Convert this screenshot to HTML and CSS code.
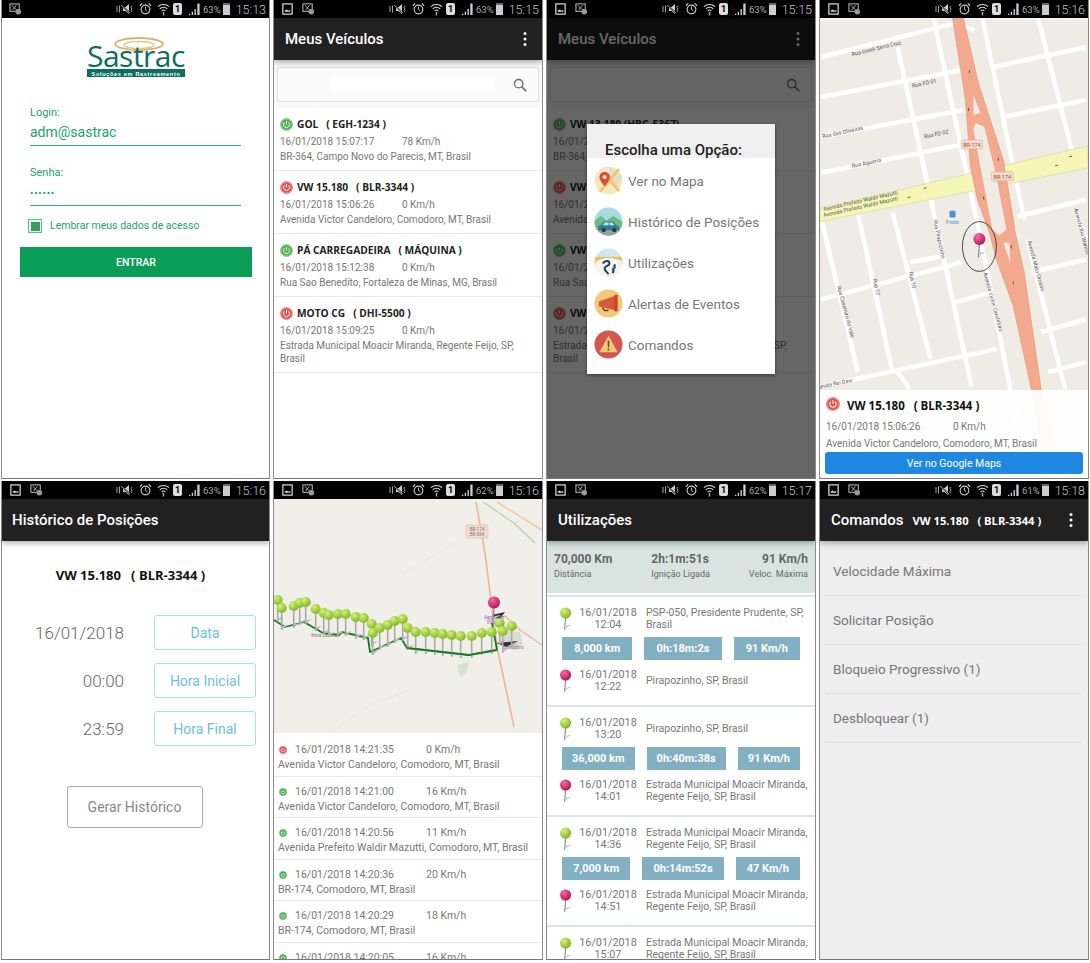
FILE: index.html
```html
<!DOCTYPE html>
<html lang="pt-BR">
<head>
    <meta charset="UTF-8">
    <meta name="viewport" content="width=device-width, initial-scale=1.0">
    <title>Sastrac - Soluções em Rastreamento</title>
    <link rel="stylesheet" href="styles.css">
</head>
<body>
    <!-- icones usados em todas as telas -->
    <svg class="defs" width="0" height="0">
        <defs>
            <radialGradient id="ballGreen" cx="35%" cy="30%" r="75%"><stop offset="0" stop-color="#d6f07a"/><stop offset="1" stop-color="#7db322"/></radialGradient>
            <radialGradient id="ballPink" cx="35%" cy="30%" r="75%"><stop offset="0" stop-color="#f56aa8"/><stop offset="1" stop-color="#b50f55"/></radialGradient>
            <symbol id="i-photo" viewBox="0 0 14 14"><rect x="2" y="1.5" width="10" height="11" fill="none" stroke="#ddd" stroke-width="1.3"/><path d="M4 10h6V8L8 9 6 7.5 4 9z" fill="#ddd"/></symbol>
            <symbol id="i-shot" viewBox="0 0 14 14"><rect x="1" y="1.5" width="10" height="8" fill="none" stroke="#bbb" stroke-width="1.1"/><path d="M3 3l5 5M8 3L4 8" stroke="#bbb"/><circle cx="10" cy="10" r="3" fill="#999"/></symbol>
            <symbol id="i-mute" viewBox="0 0 18 14"><path d="M7 5h2.500L13 2v10L9.500 9H7z" fill="#ccc"/><path d="M5 3l9 8" stroke="#000" stroke-width="1.600"/><path d="M5 3l9 8" stroke="#ccc" stroke-width=".8"/><path d="M1 4v6M3.500 3.500v7M16 4l-1 1.500 1 1.500-1 1.500 1 1.500" fill="none" stroke="#bbb" stroke-width=".9"/></symbol>
            <symbol id="i-alarm" viewBox="0 0 14 14"><circle cx="7" cy="7.500" r="4.700" fill="none" stroke="#ccc" stroke-width="1.200"/><path d="M7 4.500v3l2 1.500" fill="none" stroke="#ccc"/><path d="M1 3.500L3.500 1M13 3.500L10.500 1" stroke="#ccc" stroke-width="1.300"/></symbol>
            <symbol id="i-wifi" viewBox="0 0 14 14"><path d="M1 4.500a9 9 0 0 1 12 0M3 6.800a6 6 0 0 1 8 0M5 9a3 3 0 0 1 4 0" fill="none" stroke="#ddd" stroke-width="1.200"/><path d="M6.200 10h1.600v4H6.200z" fill="#aaa"/></symbol>
            <symbol id="i-signal" viewBox="0 0 14 14"><path d="M1 12h1.500v1.500H1zM4 10h1.500v3.500H4zM7 7h1.500v6.500H7zM10 1h2.500v12.500H10z" fill="#ccc"/></symbol>
            <symbol id="i-power" viewBox="0 0 16 16"><circle cx="8" cy="8" r="8" fill="currentColor" opacity=".65"/><circle cx="8" cy="8" r="6.300" fill="currentColor"/><path d="M5.400 5.400a3.700 3.700 0 1 0 5.200 0M8 3.800V8" fill="none" stroke="#fff" stroke-width="1.200"/></symbol>
            <symbol id="i-kebab" viewBox="0 0 6 16"><circle cx="3" cy="2.500" r="1.500" fill="#fff"/><circle cx="3" cy="8" r="1.500" fill="#fff"/><circle cx="3" cy="13.500" r="1.500" fill="#fff"/></symbol>
            <symbol id="i-search" viewBox="0 0 16 16"><circle cx="6.500" cy="6.500" r="4.800" fill="none" stroke="#666" stroke-width="1.500"/><path d="M10 10l5 5" stroke="#666" stroke-width="1.700"/></symbol>
            <symbol id="pin-green" viewBox="0 0 16 26"><path d="M7 23l7-4-6 1z" fill="#ccc"/><path d="M7 12L6 25" stroke="#888" stroke-width="1.200"/><circle cx="7" cy="6.500" r="6" fill="url(#ballGreen)"/></symbol>
            <symbol id="pin-pink" viewBox="0 0 16 26"><path d="M7 23l7-4-6 1z" fill="#ccc"/><path d="M7 12L6 25" stroke="#888" stroke-width="1.200"/><circle cx="7" cy="6.500" r="6" fill="url(#ballPink)"/></symbol>
            <symbol id="route-ball" viewBox="0 0 16 34"><path d="M7 32l8-5-7 1z" fill="#bbb"/><path d="M7 10v23" stroke="#aaa" stroke-width="2"/><circle cx="7" cy="6" r="6.200" fill="url(#ballGreen)"/></symbol>
        </defs>
    </svg>

    <div class="gallery">

        <!-- tela de login -->
        <div class="phone">
            <div class="statusbar">
                <div class="status-left"><svg class="st-icon"><use href="#i-shot"/></svg></div>
                <div class="status-right">
                    <svg class="st-icon wide"><use href="#i-mute"/></svg>
                    <svg class="st-icon"><use href="#i-alarm"/></svg>
                    <svg class="st-icon tight"><use href="#i-wifi"/></svg>
                    <span class="sim">1</span>
                    <svg class="st-icon tight"><use href="#i-signal"/></svg>
                    <span class="battery-text">63%</span><span class="battery"></span>
                    <span class="clock">15:13</span>
                </div>
            </div>
            <div class="login">
                <svg class="logo" viewBox="0 0 100 42" width="100" height="42">
                    <ellipse cx="52" cy="7" rx="24" ry="6" fill="none" stroke="#d9b36c" stroke-width="1.800"/>
                    <ellipse cx="52" cy="8" rx="15" ry="3.500" fill="none" stroke="#e3c88f" stroke-width="1.400"/>
                    <text x="0" y="30" class="logo-name">Sastrac</text>
                    <rect x="0" y="32" width="98" height="8" fill="#0f6d5f"/>
                    <text x="49" y="38.500" text-anchor="middle" class="logo-sub">Soluções em Rastreamento</text>
                </svg>
                <label class="field-label">Login:</label>
                <div class="field-value">adm@sastrac</div>
                <label class="field-label second">Senha:</label>
                <div class="field-value pass">••••••</div>
                <div class="remember"><span class="check"><span></span></span>Lembrar meus dados de acesso</div>
                <button class="enter">ENTRAR</button>
            </div>
        </div>

        <!-- lista de veiculos -->
        <div class="phone">
            <div class="statusbar">
                <div class="status-left"><svg class="st-icon"><use href="#i-photo"/></svg><svg class="st-icon"><use href="#i-shot"/></svg></div>
                <div class="status-right">
                    <svg class="st-icon wide"><use href="#i-mute"/></svg>
                    <svg class="st-icon"><use href="#i-alarm"/></svg>
                    <svg class="st-icon tight"><use href="#i-wifi"/></svg>
                    <span class="sim">1</span>
                    <svg class="st-icon tight"><use href="#i-signal"/></svg>
                    <span class="battery-text">63%</span><span class="battery"></span>
                    <span class="clock">15:15</span>
                </div>
            </div>
            <div class="screen">
                <div class="appbar"><span class="appbar-title">Meus Veículos</span><svg class="kebab"><use href="#i-kebab"/></svg></div>
                <div class="search-wrap"><div class="search"><span class="search-strip"></span><svg class="search-icon"><use href="#i-search"/></svg></div></div>
                <div class="vehicle">
                    <div class="vehicle-name"><svg class="power on"><use href="#i-power"/></svg>GOL   ( EGH-1234 )</div>
                    <div class="vehicle-info"><span class="when">16/01/2018 15:07:17</span><span>78 Km/h</span></div>
                    <div class="vehicle-addr">BR-364, Campo Novo do Parecis, MT, Brasil</div>
                </div>
                <div class="vehicle">
                    <div class="vehicle-name"><svg class="power off"><use href="#i-power"/></svg>VW 15.180   ( BLR-3344 )</div>
                    <div class="vehicle-info"><span class="when">16/01/2018 15:06:26</span><span>0 Km/h</span></div>
                    <div class="vehicle-addr">Avenida Victor Candeloro, Comodoro, MT, Brasil</div>
                </div>
                <div class="vehicle">
                    <div class="vehicle-name"><svg class="power on"><use href="#i-power"/></svg>PÁ CARREGADEIRA   ( MÁQUINA )</div>
                    <div class="vehicle-info"><span class="when">16/01/2018 15:12:38</span><span>0 Km/h</span></div>
                    <div class="vehicle-addr">Rua Sao Benedito, Fortaleza de Minas, MG, Brasil</div>
                </div>
                <div class="vehicle">
                    <div class="vehicle-name"><svg class="power off"><use href="#i-power"/></svg>MOTO CG   ( DHI-5500 )</div>
                    <div class="vehicle-info"><span class="when">16/01/2018 15:09:25</span><span>0 Km/h</span></div>
                    <div class="vehicle-addr">Estrada Municipal Moacir Miranda, Regente Feijo, SP, Brasil</div>
                </div>
            </div>
        </div>

        <!-- dialogo de opcoes -->
        <div class="phone">
            <div class="statusbar">
                <div class="status-left"><svg class="st-icon"><use href="#i-photo"/></svg><svg class="st-icon"><use href="#i-shot"/></svg></div>
                <div class="status-right">
                    <svg class="st-icon wide"><use href="#i-mute"/></svg>
                    <svg class="st-icon"><use href="#i-alarm"/></svg>
                    <svg class="st-icon tight"><use href="#i-wifi"/></svg>
                    <span class="sim">1</span>
                    <svg class="st-icon tight"><use href="#i-signal"/></svg>
                    <span class="battery-text">63%</span><span class="battery"></span>
                    <span class="clock">15:15</span>
                </div>
            </div>
            <div class="screen">
                <div class="appbar"><span class="appbar-title">Meus Veículos</span><svg class="kebab"><use href="#i-kebab"/></svg></div>
                <div class="search-wrap"><div class="search"><svg class="search-icon"><use href="#i-search"/></svg></div></div>
                <div class="vehicle">
                    <div class="vehicle-name"><svg class="power on"><use href="#i-power"/></svg>VW 13.180 (HBG-5367)</div>
                    <div class="vehicle-info"><span class="when">16/01/2018 15:07:17</span><span>78 Km/h</span></div>
                    <div class="vehicle-addr">BR-364, Campo Novo do Parecis, MT, Brasil</div>
                </div>
                <div class="vehicle">
                    <div class="vehicle-name"><svg class="power off"><use href="#i-power"/></svg>VW 15.180   ( BLR-3344 )</div>
                    <div class="vehicle-info"><span class="when">16/01/2018 15:06:26</span><span>0 Km/h</span></div>
                    <div class="vehicle-addr">Avenida Victor Candeloro, Comodoro, MT, Brasil</div>
                </div>
                <div class="vehicle">
                    <div class="vehicle-name"><svg class="power on"><use href="#i-power"/></svg>VW 13.180 (HBG-5367)</div>
                    <div class="vehicle-info"><span class="when">16/01/2018 15:12:38</span><span>0 Km/h</span></div>
                    <div class="vehicle-addr">Rua Sao Benedito, Fortaleza de Minas, MG, Brasil</div>
                </div>
                <div class="vehicle">
                    <div class="vehicle-name"><svg class="power off"><use href="#i-power"/></svg>VW 15.180   ( BLR-3344 )</div>
                    <div class="vehicle-info"><span class="when">16/01/2018 15:09:25</span><span>0 Km/h</span></div>
                    <div class="vehicle-addr">Estrada Municipal Moacir Miranda, Regente Feijo, SP, Brasil</div>
                </div>
                <div class="dim">
                    <div class="dialog">
                        <div class="dialog-title">Escolha uma Opção:</div>
                        <div class="option">
                            <svg class="option-icon" viewBox="0 0 30 30"><circle cx="15" cy="15" r="14.500" fill="#f5e8bd"/><path d="M16 1l13 9-5 12-10-8z" fill="#e2dcc8"/><path d="M6 27L26 3M11 9l15 17" stroke="#efc35c" stroke-width="2.500"/><path d="M11 6a5.500 5.500 0 0 1 5.500 5.500C16.500 15 11 21 11 21S5.500 15 5.500 11.500A5.500 5.500 0 0 1 11 6z" fill="#dd4b45"/><circle cx="11" cy="11.500" r="2.200" fill="#f5e8bd"/></svg>
                            <span>Ver no Mapa</span>
                        </div>
                        <div class="option">
                            <svg class="option-icon" viewBox="0 0 30 30"><clipPath id="c2"><circle cx="15" cy="15" r="14.500"/></clipPath><g clip-path="url(#c2)"><rect width="30" height="30" fill="#a9dbe2"/><path d="M0 15l7-6 6 5 7-5 10 7v14H0z" fill="#6dba7c"/><rect y="21" width="30" height="9" fill="#9d9d9d"/><path d="M4 20l3-1 3-4h10l3 4 3 1v4H4z" fill="#2f7d90"/><path d="M11 16h4v3h-6zM16 16h3l2 3h-5z" fill="#bfe6ec"/><circle cx="10" cy="24" r="2.200" fill="#2a3a40"/><circle cx="21" cy="24" r="2.200" fill="#2a3a40"/></g></svg>
                            <span>Histórico de Posições</span>
                        </div>
                        <div class="option">
                            <svg class="option-icon" viewBox="0 0 30 30"><clipPath id="c3"><circle cx="15" cy="15" r="14.500"/></clipPath><g clip-path="url(#c3)"><rect width="30" height="30" fill="#cde9ef"/><path d="M0 9h30v12H0z" fill="#eebf58"/><path d="M0 16c8-7 18-7 30-2v16H0z" fill="#f2f4f3"/></g><path d="M9 16c3-4 7-3 7 0 0 3-5 2-5 5s3 4 4 6M19 21c1 1 2 3 0 5M22 17c-2 2-1 3 0 4" fill="none" stroke="#1f3f4f" stroke-width="2"/></svg>
                            <span>Utilizações</span>
                        </div>
                        <div class="option">
                            <svg class="option-icon" viewBox="0 0 30 30"><circle cx="15" cy="15" r="14.500" fill="#f6c772"/><path d="M5 13l17-6v15L5 18z" fill="#d9573f"/><rect x="21" y="6" width="3.500" height="17" fill="#bd4a35"/><path d="M9 19c0 3 3 4 6 3" fill="none" stroke="#444" stroke-width="1.500"/></svg>
                            <span>Alertas de Eventos</span>
                        </div>
                        <div class="option">
                            <svg class="option-icon" viewBox="0 0 30 30"><circle cx="15" cy="15" r="14.500" fill="#d35651"/><path d="M15 6l9.500 17h-19z" fill="#f6c772"/><path d="M14 11h2l-.300 7h-1.400z" fill="#555"/><circle cx="15" cy="20.300" r="1.100" fill="#555"/></svg>
                            <span>Comandos</span>
                        </div>
                    </div>
                </div>
            </div>
        </div>

        <!-- mapa do veiculo -->
        <div class="phone">
            <div class="statusbar">
                <div class="status-left"><svg class="st-icon"><use href="#i-photo"/></svg><svg class="st-icon"><use href="#i-shot"/></svg></div>
                <div class="status-right">
                    <svg class="st-icon wide"><use href="#i-mute"/></svg>
                    <svg class="st-icon"><use href="#i-alarm"/></svg>
                    <svg class="st-icon tight"><use href="#i-wifi"/></svg>
                    <span class="sim">1</span>
                    <svg class="st-icon tight"><use href="#i-signal"/></svg>
                    <span class="battery-text">63%</span><span class="battery"></span>
                    <span class="clock">15:16</span>
                </div>
            </div>
            <div class="screen">
                <svg class="street-map" viewBox="820 18 269 461">
                    <rect x="820" y="18" width="269" height="461" fill="#efece6"/>
                    <g class="streets">
                        <path d="M821 57L955 23M993 67L1087 47M821 97L962 70M821 137L964 110M821 173L971 143M1004 117L1087 100"/>
                        <path d="M934 18L980 233L1011 390L1030 479M898 47L972 387M983 18L1025 220M1039 18L1077 167M858 213L892 370M893 213L931 360M827 243L858 373M822 222L827 243M1028 240L1066 390M1077 213L1087 240"/>
                        <path d="M821 300L962 263M823 387L997 350M955 303L993 293M910 263L941 257M1032 273L1087 260M1042 333L1087 320M1049 373L1087 363M1018 217L1087 200M896 370L910 390M975 30L955 23"/>
                    </g>
                    <path d="M820 209L1089 146V168L820 222z" fill="#f6f6b9" stroke="#dedb9c" stroke-width=".8"/>
                    <path d="M953 18L966 100L971 167L978 200L990 233L997 260L1014 307L1032 390L1050 479H1062L1042 390L1025 273L1016 233L1012 207L1004 160L979 83L964 18z" fill="#f3a98d" stroke="#e39579" stroke-width=".6"/>
                    <path d="M974 95L981 113L974 115z" fill="#efece6"/>
                    <path d="M976 123L985 127L997 177L1007 230L1000 236L993 230L981 167L974 130z" fill="#efece6"/>
                    <path d="M1004 243L1010 243L1011 263z" fill="#efece6"/>
                    <g stroke="#5a3020" stroke-width=".8">
                        <path d="M970 70v3M969 108v3M999 158v3M984 197l.6 3M1012 246v3M1014 282v3M927 188l-3 .7M908 198l3-.7M1056 166l3-.7M1070 157l3-.7"/>
                    </g>
                    <g class="shield"><rect x="962" y="140" width="21" height="9" rx="1"/><rect x="992" y="172" width="22" height="9" rx="1"/></g>
                    <g class="shield-text"><text x="972.500" y="147">BR-174</text><text x="1003" y="179">BR-174</text></g>
                    <g class="map-label">
                        <text transform="translate(877 50) rotate(-14)">Rua Giseli Serra Cruz</text>
                        <text transform="translate(925 85) rotate(-12)">Rua FD 01</text>
                        <text transform="translate(843 134) rotate(-12)">Rua das Oliveiras</text>
                        <text transform="translate(937 136) rotate(-12)">Rua FD 02</text>
                        <text transform="translate(867 165) rotate(-12)">Rua Aguerra</text>
                        <text transform="translate(861 203) rotate(-13)">Avenida Prefeito Waldir Mazutti</text>
                        <text transform="translate(861 209) rotate(-13)">Avenida Prefeito Waldir Mazutti</text>
                        <text transform="translate(938 240) rotate(78)">Rua Pirapozinho</text>
                        <text transform="translate(992 303) rotate(75)">Avenida Victor Candeloro</text>
                        <text transform="translate(1035 267) rotate(75)">Avenida Mato Grosso</text>
                        <text transform="translate(844 313) rotate(75)">Rua Casemiro do Vale</text>
                        <text transform="translate(875 288) rotate(78)">Rua 12</text>
                        <text transform="translate(911 281) rotate(78)">Rua 10</text>
                        <text transform="translate(1081 232) rotate(75)">Avenida Rio Branco</text>
                        <text transform="translate(833 387) rotate(-12)">Avenida Rei Davi</text>
                    </g>
                    <rect x="950" y="211" width="6" height="7" rx="1" fill="#4a90d9"/>
                    <text x="953" y="224" class="poi">Posto</text>
                    <ellipse cx="980" cy="247" rx="17" ry="25" fill="none" stroke="#222" stroke-width=".8"/>
                    <use href="#pin-pink" x="973" y="233" width="16" height="26"/>
                </svg>
                <div class="map-panel">
                    <div class="panel-name"><svg class="power off big"><use href="#i-power"/></svg>VW 15.180   ( BLR-3344 )</div>
                    <div class="vehicle-info panel-info"><span class="when">16/01/2018 15:06:26</span><span>0 Km/h</span></div>
                    <div class="vehicle-addr panel-addr">Avenida Victor Candeloro, Comodoro, MT, Brasil</div>
                    <button class="maps-btn">Ver no Google Maps</button>
                </div>
            </div>
        </div>

        <!-- historico de posicoes -->
        <div class="phone">
            <div class="statusbar">
                <div class="status-left"><svg class="st-icon"><use href="#i-photo"/></svg><svg class="st-icon"><use href="#i-shot"/></svg></div>
                <div class="status-right">
                    <svg class="st-icon wide"><use href="#i-mute"/></svg>
                    <svg class="st-icon"><use href="#i-alarm"/></svg>
                    <svg class="st-icon tight"><use href="#i-wifi"/></svg>
                    <span class="sim">1</span>
                    <svg class="st-icon tight"><use href="#i-signal"/></svg>
                    <span class="battery-text">63%</span><span class="battery"></span>
                    <span class="clock">15:16</span>
                </div>
            </div>
            <div class="screen">
                <div class="appbar"><span class="appbar-title flush">Histórico de Posições</span></div>
                <div class="history">
                    <div class="history-name">VW 15.180   ( BLR-3344 )</div>
                    <div class="history-row"><span>16/01/2018</span><button class="pick">Data</button></div>
                    <div class="history-row"><span>00:00</span><button class="pick">Hora Inicial</button></div>
                    <div class="history-row"><span>23:59</span><button class="pick">Hora Final</button></div>
                    <button class="generate">Gerar Histórico</button>
                </div>
            </div>
        </div>

        <!-- mapa do historico -->
        <div class="phone">
            <div class="statusbar">
                <div class="status-left"><svg class="st-icon"><use href="#i-photo"/></svg><svg class="st-icon"><use href="#i-shot"/></svg></div>
                <div class="status-right">
                    <svg class="st-icon wide"><use href="#i-mute"/></svg>
                    <svg class="st-icon"><use href="#i-alarm"/></svg>
                    <svg class="st-icon tight"><use href="#i-wifi"/></svg>
                    <span class="sim">1</span>
                    <svg class="st-icon tight"><use href="#i-signal"/></svg>
                    <span class="battery-text">62%</span><span class="battery"></span>
                    <span class="clock">15:16</span>
                </div>
            </div>
            <div class="screen">
                <svg class="route-map" viewBox="274 499 268 234">
                    <rect x="274" y="499" width="268" height="234" fill="#f1efea"/>
                    <path d="M476 502L485 553L497 647L514 727" fill="none" stroke="#efb49c" stroke-width="1.600"/>
                    <path d="M483 502L514 523L535 543" fill="none" stroke="#b5d3a8" stroke-width="1.300"/>
                    <path d="M497 502L542 530" fill="none" stroke="#efc9a0" stroke-width="1.500"/>
                    <path d="M488 620L505 616L520 630L542 645" fill="none" stroke="#efb49c" stroke-width="1.300"/>
                    <path d="M402 575L480 528M330 733L370 705L410 690L440 660" fill="none" stroke="#e4e2dc" stroke-width=".8"/>
                    <rect x="466" y="525" width="22" height="13" rx="1" fill="#f5dcd0" stroke="#e6b5a0" stroke-width=".6"/>
                    <text x="477" y="530.500" class="map-mini">BR-174</text>
                    <text x="477" y="536" class="map-mini">BR-364</text>
                    <path d="M500 630l20 2 3 12-8 6-12-2z" fill="#dcdad5"/>
                    <path d="M457 665l12-3-3 11-6 4z" fill="#d5e3cc"/>
                    <path d="M492 615l13-3-6 8zM496 643l22-2-12 6z" fill="#333"/>
                    <text x="325" y="637" class="map-mini">Nova Lacerda</text>
                    <text x="513" y="649" class="map-mini">Comodoro</text>
                    <text x="494" y="619" class="map-mini purple">Aeroporto</text>
                    <text x="494" y="624" class="map-mini purple">Vilhena</text>
                    <path d="M274 620L285 627L304 622L323 633L339 635L342 632L368 638L370 652L401 638L407 648L469 655L497 650L492 623" fill="none" stroke="#11791f" stroke-width="1.800" stroke-linejoin="round"/>
                    <g class="route-pins">
                        <use href="#route-ball" x="272" y="595" width="13" height="28"/><use href="#route-ball" x="276" y="603" width="13" height="28"/><use href="#route-ball" x="288" y="601" width="13" height="28"/><use href="#route-ball" x="294" y="598" width="13" height="28"/><use href="#route-ball" x="300" y="597" width="13" height="28"/>
                        <use href="#route-ball" x="310" y="604" width="13" height="28"/><use href="#route-ball" x="318" y="608" width="13" height="28"/><use href="#route-ball" x="323" y="610" width="13" height="28"/><use href="#route-ball" x="332" y="609" width="13" height="28"/><use href="#route-ball" x="340" y="609" width="13" height="28"/>
                        <use href="#route-ball" x="350" y="612" width="13" height="28"/><use href="#route-ball" x="358" y="613" width="13" height="28"/><use href="#route-ball" x="366" y="619" width="13" height="28"/><use href="#route-ball" x="367" y="628" width="13" height="28"/><use href="#route-ball" x="374" y="623" width="13" height="28"/>
                        <use href="#route-ball" x="382" y="620" width="13" height="28"/><use href="#route-ball" x="389" y="616" width="13" height="28"/><use href="#route-ball" x="397" y="614" width="13" height="28"/><use href="#route-ball" x="402" y="623" width="13" height="28"/><use href="#route-ball" x="410" y="627" width="13" height="28"/>
                        <use href="#route-ball" x="420" y="627" width="13" height="28"/><use href="#route-ball" x="429" y="628" width="13" height="28"/><use href="#route-ball" x="437" y="629" width="13" height="28"/><use href="#route-ball" x="446" y="630" width="13" height="28"/><use href="#route-ball" x="455" y="631" width="13" height="28"/>
                        <use href="#route-ball" x="466" y="631" width="13" height="28"/><use href="#route-ball" x="476" y="628" width="13" height="28"/><use href="#route-ball" x="486" y="627" width="13" height="28"/><use href="#route-ball" x="494" y="618" width="13" height="28"/><use href="#route-ball" x="497" y="626" width="13" height="28"/><use href="#route-ball" x="506" y="621" width="13" height="28"/>
                    </g>
                    <path d="M407 648L469 655L497 650" fill="none" stroke="#11791f" stroke-width="1.600"/>
                    <use href="#pin-pink" x="487" y="596" width="16" height="26"/>
                </svg>
                <div class="position"><div class="position-info"><svg class="power off mini"><use href="#i-power"/></svg><span class="when">16/01/2018 14:21:35</span><span>0 Km/h</span></div><div class="position-addr">Avenida Victor Candeloro, Comodoro, MT, Brasil</div></div>
                <div class="position"><div class="position-info"><svg class="power on mini"><use href="#i-power"/></svg><span class="when">16/01/2018 14:21:00</span><span>16 Km/h</span></div><div class="position-addr">Avenida Victor Candeloro, Comodoro, MT, Brasil</div></div>
                <div class="position"><div class="position-info"><svg class="power on mini"><use href="#i-power"/></svg><span class="when">16/01/2018 14:20:56</span><span>11 Km/h</span></div><div class="position-addr">Avenida Prefeito Waldir Mazutti, Comodoro, MT, Brasil</div></div>
                <div class="position"><div class="position-info"><svg class="power on mini"><use href="#i-power"/></svg><span class="when">16/01/2018 14:20:36</span><span>20 Km/h</span></div><div class="position-addr">BR-174, Comodoro, MT, Brasil</div></div>
                <div class="position"><div class="position-info"><svg class="power on mini"><use href="#i-power"/></svg><span class="when">16/01/2018 14:20:29</span><span>18 Km/h</span></div><div class="position-addr">BR-174, Comodoro, MT, Brasil</div></div>
                <div class="position"><div class="position-info"><svg class="power on mini"><use href="#i-power"/></svg><span class="when">16/01/2018 14:20:05</span><span>16 Km/h</span></div></div>
            </div>
        </div>

        <!-- utilizacoes -->
        <div class="phone">
            <div class="statusbar">
                <div class="status-left"><svg class="st-icon"><use href="#i-photo"/></svg><svg class="st-icon"><use href="#i-shot"/></svg></div>
                <div class="status-right">
                    <svg class="st-icon wide"><use href="#i-mute"/></svg>
                    <svg class="st-icon"><use href="#i-alarm"/></svg>
                    <svg class="st-icon tight"><use href="#i-wifi"/></svg>
                    <span class="sim">1</span>
                    <svg class="st-icon tight"><use href="#i-signal"/></svg>
                    <span class="battery-text">62%</span><span class="battery"></span>
                    <span class="clock">15:17</span>
                </div>
            </div>
            <div class="screen">
                <div class="appbar"><span class="appbar-title">Utilizações</span></div>
                <div class="summary">
                    <div><b>70,000 Km</b><small>Distância</small></div>
                    <div><b>2h:1m:51s</b><small>Ignição Ligada</small></div>
                    <div class="right"><b>91 Km/h</b><small>Veloc. Máxima</small></div>
                </div>
                <div class="trip first">
                    <div class="trip-row"><svg class="pin"><use href="#pin-green"/></svg><div class="trip-date">16/01/2018<br>12:04</div><div class="trip-addr">PSP-050, Presidente Prudente, SP, Brasil</div></div>
                    <div class="chips"><span>8,000 km</span><span>0h:18m:2s</span><span>91 Km/h</span></div>
                    <div class="trip-row"><svg class="pin"><use href="#pin-pink"/></svg><div class="trip-date">16/01/2018<br>12:22</div><div class="trip-addr">Pirapozinho, SP, Brasil</div></div>
                </div>
                <div class="trip">
                    <div class="trip-row"><svg class="pin"><use href="#pin-green"/></svg><div class="trip-date">16/01/2018<br>13:20</div><div class="trip-addr">Pirapozinho, SP, Brasil</div></div>
                    <div class="chips"><span>36,000 km</span><span>0h:40m:38s</span><span>91 Km/h</span></div>
                    <div class="trip-row"><svg class="pin"><use href="#pin-pink"/></svg><div class="trip-date">16/01/2018<br>14:01</div><div class="trip-addr">Estrada Municipal Moacir Miranda, Regente Feijo, SP, Brasil</div></div>
                </div>
                <div class="trip">
                    <div class="trip-row"><svg class="pin"><use href="#pin-green"/></svg><div class="trip-date">16/01/2018<br>14:36</div><div class="trip-addr">Estrada Municipal Moacir Miranda, Regente Feijo, SP, Brasil</div></div>
                    <div class="chips"><span>7,000 km</span><span>0h:14m:52s</span><span>47 Km/h</span></div>
                    <div class="trip-row"><svg class="pin"><use href="#pin-pink"/></svg><div class="trip-date">16/01/2018<br>14:51</div><div class="trip-addr">Estrada Municipal Moacir Miranda, Regente Feijo, SP, Brasil</div></div>
                </div>
                <div class="trip">
                    <div class="trip-row"><svg class="pin"><use href="#pin-green"/></svg><div class="trip-date">16/01/2018<br>15:07</div><div class="trip-addr">Estrada Municipal Moacir Miranda, Regente Feijo, SP, Brasil</div></div>
                </div>
            </div>
        </div>

        <!-- comandos -->
        <div class="phone">
            <div class="statusbar">
                <div class="status-left"><svg class="st-icon"><use href="#i-photo"/></svg><svg class="st-icon"><use href="#i-shot"/></svg></div>
                <div class="status-right">
                    <svg class="st-icon wide"><use href="#i-mute"/></svg>
                    <svg class="st-icon"><use href="#i-alarm"/></svg>
                    <svg class="st-icon tight"><use href="#i-wifi"/></svg>
                    <span class="sim">1</span>
                    <svg class="st-icon tight"><use href="#i-signal"/></svg>
                    <span class="battery-text">61%</span><span class="battery"></span>
                    <span class="clock">15:18</span>
                </div>
            </div>
            <div class="screen grey">
                <div class="appbar"><span class="appbar-title">Comandos</span><span class="appbar-vehicle">VW 15.180   ( BLR-3344 )</span><svg class="kebab"><use href="#i-kebab"/></svg></div>
                <div class="commands">
                    <div class="command">Velocidade Máxima</div>
                    <div class="command">Solicitar Posição</div>
                    <div class="command">Bloqueio Progressivo (1)</div>
                    <div class="command">Desbloquear (1)</div>
                </div>
            </div>
        </div>

    </div>
</body>
</html>
```

FILE: styles.css
```css
html, body {
    margin: 0;
    padding: 0;
    height: 963px;
    overflow: hidden;
    background: #fff;
    font-family: Roboto, "Noto Sans", sans-serif;
}
.defs {
    position: absolute;
}
.gallery {
    display: grid;
    grid-template-columns: 269px 270px 270px 270px;
    grid-template-rows: 479px 479px;
    column-gap: 3px;
    row-gap: 2px;
    padding-left: 1px;
}
.phone {
    display: flex;
    flex-direction: column;
    overflow: hidden;
    border-left: 1px solid #8a8a8a;
    border-right: 1px solid #8a8a8a;
    border-bottom: 1px solid #777;
    background: #fff;
}

/* barra de status */
.statusbar {
    flex: 0 0 18px;
    display: flex;
    justify-content: space-between;
    align-items: center;
    padding: 0 3px 0 7px;
    background: #000;
    color: #bbb;
}
.status-left, .status-right {
    display: flex;
    align-items: center;
}
.status-left {
    gap: 3px;
}
.st-icon {
    width: 13px;
    height: 14px;
    margin-right: 5px;
}
.st-icon.tight {
    margin-right: 3px;
}
.st-icon.wide {
    width: 18px;
}
.sim {
    width: 9px;
    height: 12px;
    margin-right: 6px;
    border-radius: 2px;
    background: #ddd;
    color: #000;
    font-size: 9px;
    font-weight: 700;
    line-height: 12px;
    text-align: center;
}
.battery-text {
    font-size: 9.500px;
    color: #aaa;
    margin-left: -1px;
}
.battery {
    width: 7px;
    height: 10px;
    margin: 0 6px 0 2px;
    background: #ccc;
    border-top: 2px solid #666;
}
.clock {
    font-size: 12.500px;
    font-weight: 300;
    color: #c4c4c4;
}

/* barra do app */
.screen {
    position: relative;
    flex: 1;
    display: flex;
    flex-direction: column;
    min-height: 0;
    overflow: hidden;
    background: #fff;
}
.screen.grey {
    background: #eee;
}
.appbar {
    position: relative;
    z-index: 2;
    flex: 0 0 42px;
    display: flex;
    align-items: center;
    padding: 0 14px 0 12px;
    background: #212121;
    box-shadow: 0 2px 6px rgba(0,0,0,0.35);
}
.appbar-title {
    margin-left: -1px;
    color: #fff;
    font-size: 15px;
    font-weight: 500;
    white-space: nowrap;
}
.appbar-title.flush {
    margin-left: -2px;
}
.appbar-vehicle {
    margin-left: 9px;
    color: #fff;
    font-family: "Open Sans", sans-serif;
    font-size: 11.200px;
    font-weight: 700;
    white-space: pre;
}
.kebab {
    width: 6px;
    height: 16px;
    margin-left: auto;
}

/* login */
.login {
    flex: 1;
    display: flex;
    flex-direction: column;
    padding: 19px 28px 0 28px;
    color: #1d9f6e;
}
.logo {
    align-self: center;
    margin-bottom: 27px;
    margin-left: 3px;
    overflow: visible;
}
.logo-name {
    font-family: "Open Sans", sans-serif;
    font-size: 30px;
    fill: #0f6d5f;
    letter-spacing: -0.5px;
}
.logo-sub {
    font-family: "Liberation Sans", sans-serif;
    font-size: 5.500px;
    font-weight: 700;
    letter-spacing: 0.7px;
    fill: #fff;
}
.field-label {
    font-size: 11px;
    line-height: 14px;
}
.field-label.second {
    margin-top: 20px;
}
.field-value {
    height: 23px;
    margin-top: 2px;
    border-bottom: 1px solid #35ab80;
    font-size: 14px;
    line-height: 20px;
}
.field-value.pass {
    font-size: 10px;
    letter-spacing: 0.8px;
    line-height: 23px;
}
.remember {
    display: flex;
    align-items: center;
    margin: 13px 0 0 -2px;
    font-size: 10.500px;
    line-height: 14px;
}
.check {
    display: flex;
    align-items: center;
    justify-content: center;
    box-sizing: border-box;
    width: 14px;
    height: 14px;
    margin-right: 8px;
    border: 1px solid #5cbf97;
    background: #e7f5ef;
}
.check span {
    width: 9px;
    height: 9px;
    background: #3a9f5c;
}
.enter {
    width: 232px;
    height: 30px;
    margin: 14px 0 0 -10px;
    padding: 0;
    border: none;
    background: #0a9d58;
    color: #fff;
    font-family: Roboto, sans-serif;
    font-size: 10.500px;
    font-weight: 500;
}

/* lista de veiculos */
.search-wrap {
    flex: 0 0 48px;
    box-sizing: border-box;
    padding: 7px 3px 6px 3px;
    background: #f8f8f8;
}
.search {
    position: relative;
    height: 35px;
    box-sizing: border-box;
    border: 1px solid #ddd;
    border-radius: 3px;
    background: #fafafa;
}
.search-strip {
    position: absolute;
    left: 52px;
    top: 8px;
    width: 165px;
    height: 16px;
    background: #fff;
}
.search-icon {
    position: absolute;
    right: 11px;
    top: 10px;
    width: 14px;
    height: 14px;
}
.vehicle {
    padding: 9px 4px 7px 6px;
    border-bottom: 1px solid #e8e8e8;
}
.vehicle-name {
    display: flex;
    align-items: center;
    height: 14px;
    color: #222;
    font-family: "Open Sans", sans-serif;
    font-size: 10.200px;
    font-weight: 700;
    white-space: pre;
}
.power {
    flex: none;
    width: 13px;
    height: 13px;
    margin-right: 4px;
}
.power.on {
    color: #4caf50;
}
.power.off {
    color: #d9534f;
}
.vehicle-info {
    display: flex;
    margin-top: 4px;
    color: #777;
    font-size: 10px;
    line-height: 14px;
}
.when {
    width: 122px;
}
.vehicle-addr {
    margin-top: 1px;
    color: #777;
    font-size: 10px;
    line-height: 13px;
}

/* dialogo */
.dim {
    position: absolute;
    inset: 0;
    z-index: 3;
    display: flex;
    align-items: center;
    justify-content: center;
    background: rgba(0,0,0,0.6);
}
.dialog {
    width: 188px;
    height: 250px;
    margin-top: 2px;
    padding-bottom: 9px;
    box-sizing: border-box;
    background: #fff;
    box-shadow: 0 1px 3px rgba(0,0,0,0.5);
}
.dialog-title {
    height: 34px;
    margin-bottom: 2px;
    padding: 16px 0 0 18px;
    box-sizing: border-box;
    background: #f0f0f0;
    color: #222;
    font-size: 15px;
    font-weight: 500;
    line-height: 20px;
}
.option {
    display: flex;
    align-items: center;
    height: 41px;
    padding-left: 7px;
    color: #777;
    font-size: 13.500px;
}
.option-icon {
    width: 29px;
    height: 29px;
    margin-right: 5px;
}

/* mapa */
.street-map {
    flex: 1;
    width: 100%;
    min-height: 0;
}
.streets path {
    fill: none;
    stroke: #fff;
    stroke-width: 4.500;
}
.shield rect {
    fill: #f5dcd0;
    stroke: #dfa894;
    stroke-width: 0.6;
}
.shield-text text {
    font-family: Roboto, sans-serif;
    font-size: 5.500px;
    text-anchor: middle;
    fill: #a34a35;
}
.map-label text {
    font-family: Roboto, sans-serif;
    font-size: 5.500px;
    text-anchor: middle;
    fill: #555;
}
.poi {
    font-family: Roboto, sans-serif;
    font-size: 5px;
    text-anchor: middle;
    fill: #4a90d9;
}
.map-panel {
    position: absolute;
    left: 0;
    right: 0;
    bottom: 0;
    height: 88px;
    padding: 6px 5px 0 5px;
    box-sizing: border-box;
    background: rgba(255,255,255,0.94);
}
.panel-name {
    display: flex;
    align-items: center;
    height: 18px;
    color: #111;
    font-family: "Open Sans", sans-serif;
    font-size: 11.500px;
    font-weight: 700;
    white-space: pre;
}
.power.big {
    width: 14px;
    height: 14px;
    margin: -3px 7px 0 1px;
}
.panel-info {
    margin: 6px 0 0 1px;
}
.panel-info .when {
    width: 127px;
}
.panel-addr {
    margin: 3px 0 0 1px;
}
.maps-btn {
    display: block;
    width: 258px;
    height: 22px;
    margin-top: 2px;
    padding: 0;
    border: none;
    border-radius: 3px;
    background: #1e88e0;
    color: #fff;
    font-family: Roboto, sans-serif;
    font-size: 10.500px;
}

/* historico */
.history {
    flex: 1;
    display: flex;
    flex-direction: column;
    align-items: center;
    padding-top: 25px;
}
.history-name {
    height: 18px;
    margin: 0 10px 31px 0;
    color: #111;
    font-family: "Open Sans", sans-serif;
    font-size: 13px;
    font-weight: 700;
    line-height: 18px;
    white-space: pre;
}
.history-row {
    display: grid;
    grid-template-columns: 122px 102px;
    column-gap: 30px;
    align-items: center;
    align-self: flex-start;
    height: 34px;
    margin-bottom: 14px;
    color: #666;
    font-size: 17px;
    font-weight: 300;
    text-align: right;
}
.pick {
    height: 35px;
    padding: 0;
    border: 1px solid #a9dbeb;
    border-radius: 3px;
    background: #fff;
    color: #6cc0e0;
    font-family: Roboto, sans-serif;
    font-size: 14px;
}
.generate {
    width: 136px;
    height: 42px;
    margin: 27px 2px 0 0;
    border: 1px solid #aaa;
    border-radius: 3px;
    background: #fff;
    color: #888;
    font-family: Roboto, sans-serif;
    font-size: 14px;
}

/* mapa do historico */
.route-map {
    flex: 0 0 234px;
    width: 100%;
    margin-bottom: 2px;
}
.map-mini {
    font-family: Roboto, sans-serif;
    font-size: 4.500px;
    text-anchor: middle;
    fill: #777;
}
.map-mini.purple {
    fill: #7a5cc0;
}
.position {
    flex: none;
    height: 41.500px;
    box-sizing: border-box;
    padding: 8px 4px 0 4px;
    border-bottom: 1px solid #e8e8e8;
}
.position-info {
    display: flex;
    align-items: center;
    color: #777;
    font-size: 10.500px;
    line-height: 14px;
}
.position-info .when {
    width: 131px;
}
.power.mini {
    width: 8px;
    height: 8px;
    margin: 0 8px 0 1px;
}
.position-addr {
    margin-top: 1px;
    color: #777;
    font-size: 10.500px;
    line-height: 14px;
    white-space: nowrap;
}

/* utilizacoes */
.summary {
    flex: 0 0 52px;
    box-sizing: border-box;
    display: flex;
    justify-content: space-between;
    padding: 10px 7px 0 7px;
    background: #d9e4e1;
    color: #666;
}
.summary b {
    display: block;
    font-size: 12px;
    line-height: 16px;
}
.summary small {
    display: block;
    margin-top: 1px;
    font-size: 9px;
    line-height: 13px;
}
.summary .right {
    text-align: right;
}
.trip {
    flex: none;
    height: 110px;
    box-sizing: border-box;
    padding: 9px 7px 0 12px;
    border-top: 2px solid #dce5e3;
}
.trip.first {
    margin-top: 2px;
}
.trip-row {
    display: flex;
    align-items: center;
    height: 26px;
}
.pin {
    flex: none;
    width: 15px;
    height: 24px;
}
.trip-date {
    flex: 0 0 68px;
    color: #777;
    font-size: 10.800px;
    line-height: 12.500px;
    text-align: center;
}
.trip-addr {
    margin-left: 4px;
    color: #777;
    font-size: 10.500px;
    line-height: 12.500px;
}
.chips {
    display: flex;
    gap: 12px;
    margin: 5px 8px 8px 3px;
}
.chips span {
    flex: 1 1 auto;
    height: 23px;
    background: #83afc3;
    color: #fff;
    font-size: 11px;
    font-weight: 700;
    line-height: 23px;
    text-align: center;
}

/* comandos */
.commands {
    padding: 6px 6px 0 6px;
}
.command {
    height: 49px;
    box-sizing: border-box;
    padding: 0 0 0 7px;
    border-bottom: 1px solid #ddd;
    color: #777;
    font-size: 13.500px;
    line-height: 49px;
}
```
